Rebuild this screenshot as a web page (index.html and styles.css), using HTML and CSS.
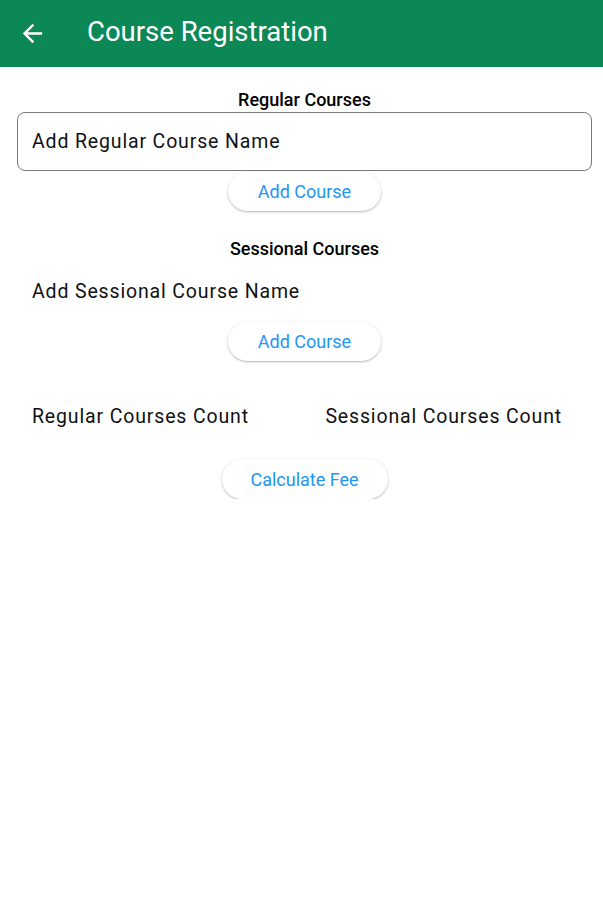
FILE: index.html
```html
<!DOCTYPE html>
<html>
<head>
<meta charset="utf-8">
<link rel="stylesheet" href="styles.css">
</head>
<body>
<header class="appbar">
  <button class="back" aria-label="Back">
    <svg width="29" height="29" viewBox="0 0 24 24"><path d="M20 11H7.83l5.59-5.59L12 4l-8 8 8 8 1.41-1.41L7.83 13H20v-2z" fill="#fff"/></svg>
  </button>
  <h1 class="title">Course Registration</h1>
</header>
<main class="content">
  <h2 class="section-title first">Regular Courses</h2>
  <div class="field">Add Regular Course Name</div>
  <div class="btn-row"><button class="pill">Add Course</button></div>
  <h2 class="section-title second">Sessional Courses</h2>
  <div class="plain-label">Add Sessional Course Name</div>
  <div class="btn-row second-btn"><button class="pill">Add Course</button></div>
  <div class="counts">
    <span>Regular Courses Count</span>
    <span>Sessional Courses Count</span>
  </div>
  <div class="btn-row calc"><button class="pill wide">Calculate Fee</button></div>
</main>
</body>
</html>
```
FILE: styles.css
```css
* { box-sizing: border-box; }
html, body { margin: 0; padding: 0; background: #fff; }
body { font-family: Roboto, "Noto Sans", sans-serif; color: #1c1b1f; width: 603px; }
.appbar {
  height: 67px;
  background: #0c8856;
  display: flex;
  align-items: center;
  padding-left: 18px;
}
.back {
  width: 29px; height: 29px; padding: 0; border: 0; background: none;
  display: flex; align-items: center; justify-content: center;
}
.title {
  margin: 0 0 0 40px;
  font-size: 27.5px;
  font-weight: 400;
  color: #fff;
  line-height: 1;
  position: relative; top: -2px;
}
.content { padding: 0 11px 0 17px; display: flex; flex-direction: column; }
.section-title {
  margin: 0;
  text-align: center;
  font-size: 18px;
  font-weight: 500;
  color: #000;
  line-height: 22px;
}
.section-title.first { margin-top: 22px; margin-bottom: 1px; }
.field {
  height: 59px;
  border: 1px solid #7a7a7a;
  border-radius: 8px;
  display: flex; align-items: center;
  padding-left: 14px;
  font-size: 19.5px;
  letter-spacing: 0.85px;
  color: #111;
  width: 575px;
}
.btn-row { display: flex; justify-content: center; }
.pill {
  height: 39px;
  width: 153px;
  margin-top: 1px;
  border: 0;
  border-radius: 20px;
  background: #fff;
  box-shadow: 0 1px 3px rgba(0,0,0,0.22), 0 1px 1px rgba(0,0,0,0.08);
  color: #2196f3;
  font-family: Roboto, sans-serif;
  font-size: 18px;
  font-weight: 400;
  padding: 0;
}
.pill.wide { width: 166px; height: 40px; }
.section-title.second { margin-top: 27px; }
.plain-label {
  margin-top: 20px;
  padding-left: 15px;
  font-size: 19.5px;
  letter-spacing: 0.85px;
  line-height: 24px;
  color: #111;
}
.second-btn { margin-top: 17px; }
.counts {
  margin-top: 44px;
  display: flex;
  justify-content: space-between;
  padding-left: 15px;
  padding-right: 30px;
  font-size: 19.5px;
  letter-spacing: 0.85px;
  line-height: 24px;
  color: #111;
}
.calc { margin-top: 29px; }
```
